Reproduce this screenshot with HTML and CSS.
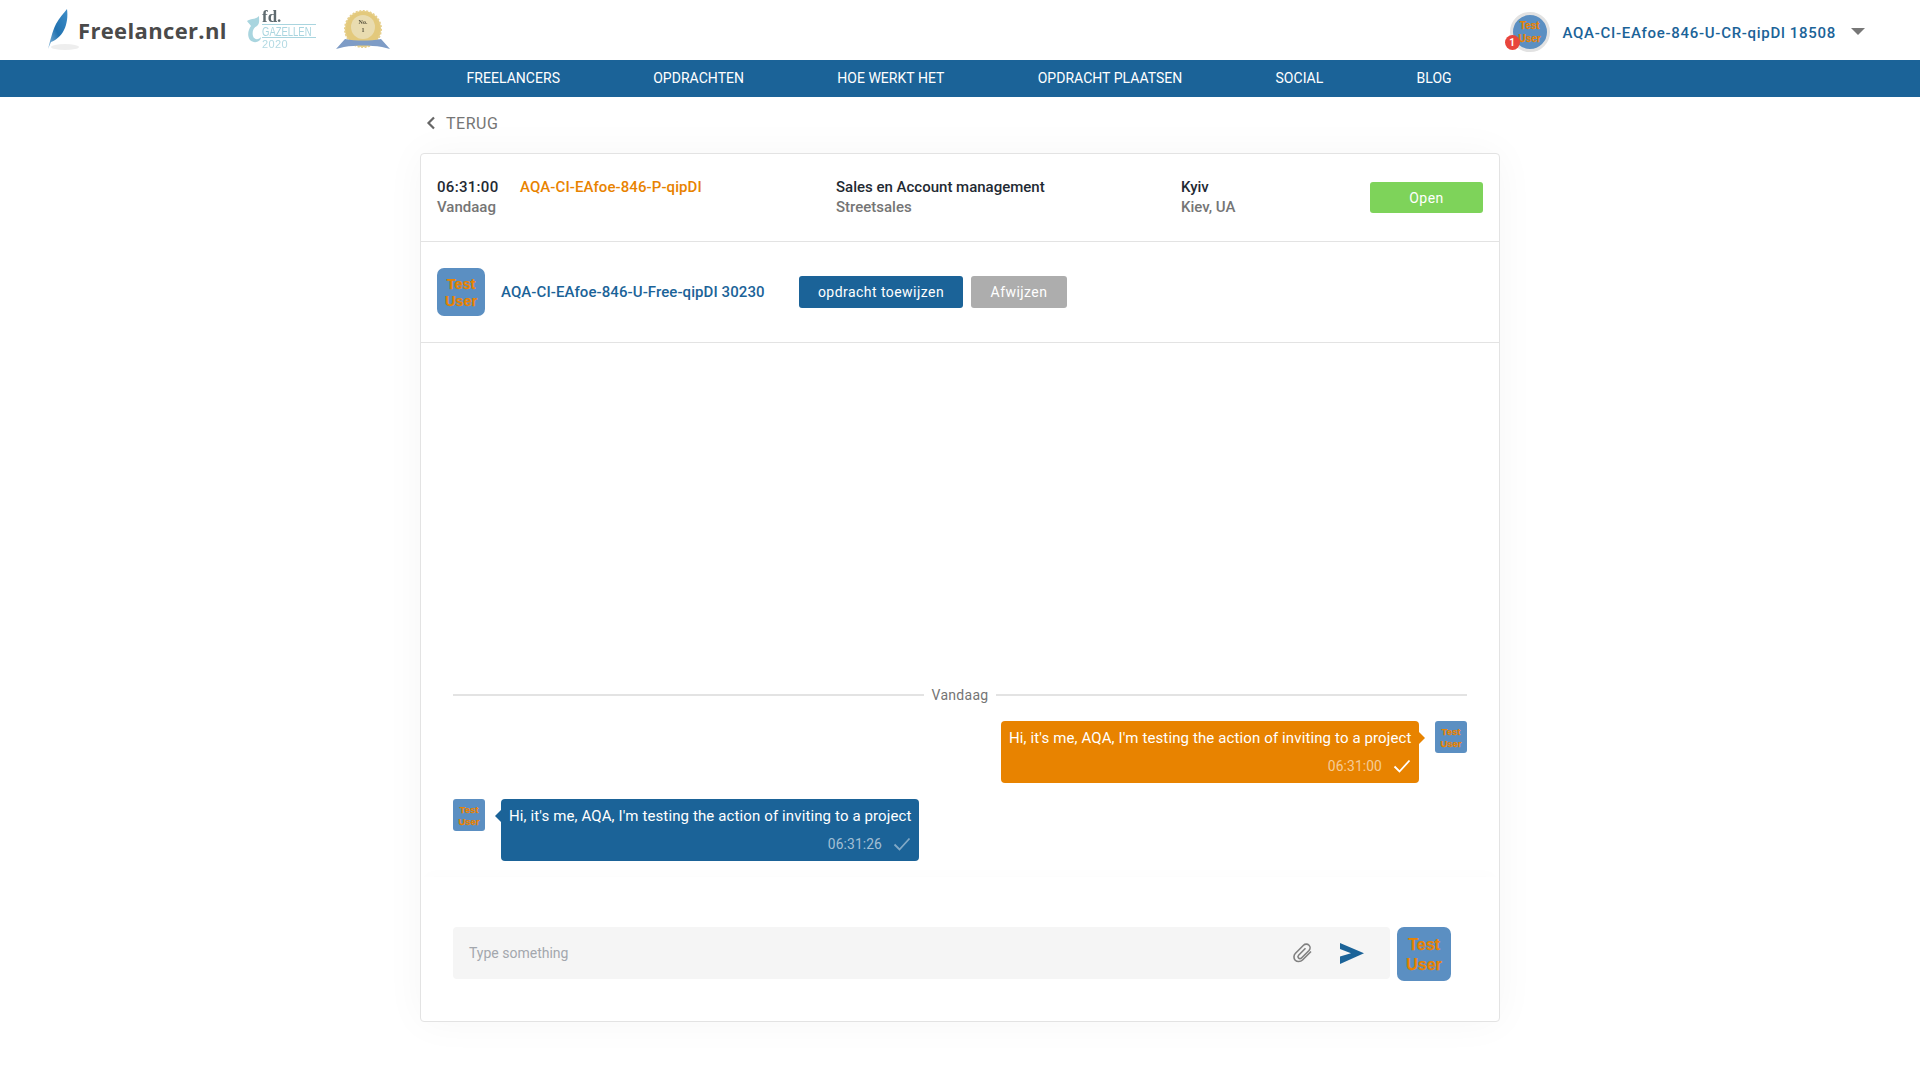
FILE: index.html
```html
<!DOCTYPE html>
<html lang="nl">
<head>
<meta charset="utf-8">
<title>Freelancer.nl</title>
<link rel="stylesheet" href="styles.css">
</head>
<body>
<header class="topbar">
  <div class="brand">
    <svg class="feather logo-soft" width="33" height="44" viewBox="0 0 33 44">
      <defs><linearGradient id="fg" x1="0" y1="1" x2="1" y2="0"><stop offset="0" stop-color="#8dbbdc"/><stop offset=".45" stop-color="#2172b0"/><stop offset="1" stop-color="#3f8ec9"/></linearGradient></defs>
      <ellipse cx="19" cy="39" rx="14" ry="3" fill="#eeeeee"/>
      <path d="M2 41C4 34 6 24 10 16C13 10 18 5 21 1C22 8 21 16 18 22C15 28 10 32 5 34Z" fill="url(#fg)"/>
    </svg>
    <span class="brand-name">Freelancer.nl</span>
    <svg class="gazelle logo-soft" width="72" height="42" viewBox="0 0 72 42">
      <path d="M1 13C5 10 9 12 13 8C13 12 14 15 11 18C7 20 6 24 7 28C8 32 13 32 15 29C15 34 8 36 4 32C1 28 2 22 5 18C4 16 2 15 1 13Z" fill="#a9d5df"/>
      <text class="gz-fd" x="16" y="14">fd.</text>
      <rect x="16" y="16" width="54" height="1" fill="#a9d5df"/>
      <text class="gz-name" transform="translate(16 28) scale(1 1.35)">GAZELLEN</text>
      <rect x="16" y="29" width="54" height="1" fill="#a9d5df"/>
      <text class="gz-year" x="16" y="40">2020</text>
    </svg>
    <svg class="medal logo-soft" width="54" height="40" viewBox="0 0 54 40">
      <circle cx="27" cy="19" r="18" fill="#e3c97c" stroke="#e6cf8c" stroke-width="2" stroke-dasharray="2 1.5"/>
      <circle cx="27" cy="17" r="12" fill="#e9dcb0"/>
      <text class="medal-no" x="27" y="14">No.</text>
      <text class="medal-no" x="27" y="22">1</text>
      <path d="M0 39L9 29C20 31 34 31 45 29L54 39L46 37C34 35 20 35 8 37Z" fill="#7e9cc6"/>
    </svg>
  </div>
  <div class="account">
    <div class="account-avatar">
      <div class="avatar avatar-head"><span>Test</span><span>User</span></div>
      <span class="badge">1</span>
    </div>
    <span class="account-name">AQA-CI-EAfoe-846-U-CR-qipDl 18508</span>
    <span class="caret"></span>
  </div>
</header>

<nav class="mainnav">
  <a>Freelancers</a>
  <a>Opdrachten</a>
  <a>Hoe werkt het</a>
  <a>Opdracht plaatsen</a>
  <a>Social</a>
  <a>Blog</a>
</nav>

<main class="page">
  <a class="back">
    <svg width="10" height="14" viewBox="0 0 10 14"><path d="M8 1.5L2.5 7L8 12.5" fill="none" stroke="#666" stroke-width="2.2"/></svg>
    <span>TERUG</span>
  </a>

  <section class="card">
    <div class="job-row">
      <div class="col-time"><div class="strong clock">06:31:00</div><div class="muted">Vandaag</div></div>
      <div class="col-name"><a class="job-link">AQA-CI-EAfoe-846-P-qipDI</a></div>
      <div class="col-cat"><div class="strong">Sales en Account management</div><div class="muted">Streetsales</div></div>
      <div class="col-loc"><div class="strong">Kyiv</div><div class="muted">Kiev, UA</div></div>
      <div class="status">Open</div>
    </div>

    <div class="user-row">
      <div class="avatar avatar-md"><span>Test</span><span>User</span></div>
      <a class="user-link">AQA-CI-EAfoe-846-U-Free-qipDI 30230</a>
      <button class="btn btn-primary">opdracht toewijzen</button>
      <button class="btn btn-grey">Afwijzen</button>
    </div>

    <div class="chat">
      <div class="day"><span>Vandaag</span></div>
      <div class="msg msg-out">
        <div class="bubble bubble-out">
          <p>Hi, it's me, AQA, I'm testing the action of inviting to a project</p>
          <div class="meta"><time>06:31:00</time>
            <svg width="18" height="14" viewBox="0 0 18 14"><path d="M1.5 7.5L6.5 12.5L16.5 1.5" fill="none" stroke="#fff" stroke-width="1.8"/></svg>
          </div>
        </div>
        <div class="avatar avatar-sm"><span>Test</span><span>User</span></div>
      </div>
      <div class="msg msg-in">
        <div class="avatar avatar-sm"><span>Test</span><span>User</span></div>
        <div class="bubble bubble-in">
          <p>Hi, it's me, AQA, I'm testing the action of inviting to a project</p>
          <div class="meta"><time>06:31:26</time>
            <svg width="18" height="14" viewBox="0 0 18 14"><path d="M1.5 7.5L6.5 12.5L16.5 1.5" fill="none" stroke="#fff" stroke-opacity=".45" stroke-width="1.8"/></svg>
          </div>
        </div>
      </div>
    </div>

    <div class="composer">
      <div class="input">
        <span class="placeholder">Type something</span>
        <svg class="clip" width="22" height="22" viewBox="0 0 22 22"><path d="M19 9.5L10.5 18C8.5 20 5 20 3.2 18.2C1.4 16.4 1.6 13.2 3.5 11.3L11.5 3.3C13 1.8 15.6 1.8 17 3.2C18.4 4.6 18.4 7 17 8.5L9.5 16C8.7 16.8 7.2 16.8 6.5 16C5.8 15.2 5.8 14 6.6 13.2L13.5 6.3" fill="none" stroke="#808080" stroke-width="1.6"/></svg>
        <svg class="send" width="24" height="21" viewBox="0 0 24 21"><path d="M0 0L24 10.2L0 21L0 13.5L11 10.2L0 6Z" fill="#1b6398"/></svg>
      </div>
      <div class="avatar avatar-lg"><span>Test</span><span>User</span></div>
    </div>
  </section>
</main>
</body>
</html>
```
FILE: styles.css
```css
* { box-sizing: border-box; }
html, body { margin: 0; padding: 0; }
body { background: #fff; font-family: Roboto, "Liberation Sans", sans-serif; font-size: 15px; color: #1f2a33; height: 1080px; overflow: hidden; }

.topbar { height: 60px; display: flex; align-items: center; justify-content: space-between; padding: 0 55px 0 46px; }
.brand { display: flex; align-items: center; }
.logo-soft { filter: blur(.4px); }
.brand-name { font-family: "Open Sans", sans-serif; font-weight: 700; font-size: 22px; color: #4a4a4a; letter-spacing: .35px; margin-left: -1px; width: 168px; }
.gazelle { margin-top: -2px; }
.gz-fd { font-family: "Liberation Serif", serif; font-weight: 700; font-size: 17px; fill: #5f6b70; }
.gz-name { font-family: "Liberation Sans", sans-serif; font-size: 9.5px; fill: #a9d5df; }
.gz-year { font-family: "Liberation Sans", sans-serif; font-size: 11px; fill: #b3dae3; letter-spacing: 0.4px; }
.medal { margin-left: 18px; }
.medal-no { font-family: "Liberation Serif", serif; font-size: 6px; font-weight: 700; fill: #55503c; text-anchor: middle; }

.account { display: flex; align-items: center; }
.account-avatar { position: relative; width: 40px; height: 40px; margin-top: 3px; }
.account-name { margin-left: 13px; font-weight: 500; font-size: 15px; letter-spacing: .7px; color: #1b6398; margin-top: 5px; }
.caret { margin-left: 15px; width: 0; height: 0; border-left: 7px solid transparent; border-right: 7px solid transparent; border-top: 7px solid #777; margin-top: 3px; }
.badge { position: absolute; left: -5px; bottom: 2px; width: 15px; height: 15px; border-radius: 50%; background: #e8453c; color: #fff; font-size: 10px; font-weight: 700; display: flex; align-items: center; justify-content: center; }

.avatar { display: flex; flex-direction: column; align-items: center; justify-content: center; background: #5b8fc2; color: #e88300; font-family: "Liberation Sans", sans-serif; font-weight: 700; flex: none; -webkit-text-stroke: .25px #e88300; padding-top: 2px; }
.avatar-head { width: 40px; height: 40px; border-radius: 50%; border: 3px solid #e2e2e2; font-size: 10px; line-height: 13px; padding-top: 0; }
.avatar-sm { width: 32px; height: 32px; border-radius: 3px; font-size: 9.5px; line-height: 12px; }
.avatar-md { width: 48px; height: 48px; border-radius: 7px; font-size: 14.5px; line-height: 17px; }
.avatar-lg { width: 54px; height: 54px; border-radius: 7px; font-size: 16px; line-height: 20px; }

.mainnav { height: 37px; background: #1b6398; display: flex; align-items: center; padding-left: 420px; }
.mainnav a { color: #fff; font-size: 14px; letter-spacing: .03px; text-transform: uppercase; padding: 0 46.6px; margin-top: -2px; }

.page { width: 1080px; margin: 0 auto; }
.back { height: 52px; margin-bottom: 4px; display: flex; align-items: center; gap: 10px; padding: 0 0 0 6px; color: #757575; font-size: 16px; letter-spacing: .5px; }

.card { border: 1px solid #e3e3e3; border-radius: 4px; box-shadow: 0 0 40px rgba(0,0,0,.04); background: #fff; height: 869px; }

.job-row { height: 88px; padding: 23px 16px 0; border-bottom: 1px solid #e3e3e3; display: flex; align-items: flex-start; line-height: 20px; font-size: 15px; }
.col-time { width: 83px; }
.col-name { width: 316px; }
.col-cat { width: 345px; }
.col-loc { flex: 1; }
.strong { font-weight: 500; color: #1f2a33; }
.clock { letter-spacing: .3px; }
.muted { font-weight: 500; color: #757575; }
.job-link { color: #e88300; font-weight: 500; letter-spacing: .08px; }
.status { width: 113px; height: 31px; margin-top: 5px; background: #7ed35a; color: #fff; border-radius: 3px; display: flex; align-items: center; justify-content: center; font-size: 14px; letter-spacing: .5px; }

.user-row { height: 101px; padding: 0 16px; border-bottom: 1px solid #e3e3e3; display: flex; align-items: center; }
.user-link { margin-left: 16px; width: 298px; font-weight: 500; color: #1b6398; font-size: 15px; letter-spacing: .08px; }
.btn { height: 32px; border: 0; border-radius: 3px; color: #fff; font-family: Roboto, sans-serif; font-size: 14px; letter-spacing: .45px; padding: 0; }
.btn-primary { width: 164px; background: #1b6398; }
.btn-grey { width: 96px; margin-left: 8px; background: #adadad; }

.chat { height: 534px; padding: 0 32px 16px; display: flex; flex-direction: column; justify-content: flex-end; gap: 16px; }
.day { display: flex; align-items: center; gap: 7px; color: #757575; font-size: 14px; letter-spacing: .3px; height: 20px; }
.day::before, .day::after { content: ""; flex: 1; height: 2px; background: #e3e3e3; }
.msg { display: flex; align-items: flex-start; gap: 16px; }
.msg-out { justify-content: flex-end; }
.bubble { position: relative; width: 418px; height: 62px; border-radius: 4px; padding: 8px; color: #fff; font-size: 15px; letter-spacing: .12px; }
.bubble p { margin: 0; line-height: 18px; white-space: nowrap; }
.bubble::after { content: ""; position: absolute; top: 11px; width: 0; height: 0; border-top: 6px solid transparent; border-bottom: 6px solid transparent; }
.bubble-out { background: #e88300; }
.bubble-out::after { right: -6px; border-left: 6px solid #e88300; }
.bubble-in { background: #1b6398; }
.bubble-in::after { left: -6px; border-right: 6px solid #1b6398; }
.meta { display: flex; justify-content: flex-end; align-items: center; gap: 11px; margin-top: 9px; font-size: 13.8px; height: 20px; color: rgba(255,255,255,.6); }

.composer { display: flex; align-items: flex-start; gap: 7px; padding: 50px 48px 0 32px; box-shadow: 0 -8px 12px -4px rgba(0,0,0,.012); }
.input { flex: 1; height: 52px; background: #f5f5f5; border-radius: 4px; display: flex; align-items: center; padding: 0 26px 0 16px; }
.placeholder { flex: 1; color: #a3a7ad; font-size: 14px; }
.clip { margin-right: 26px; }
```
